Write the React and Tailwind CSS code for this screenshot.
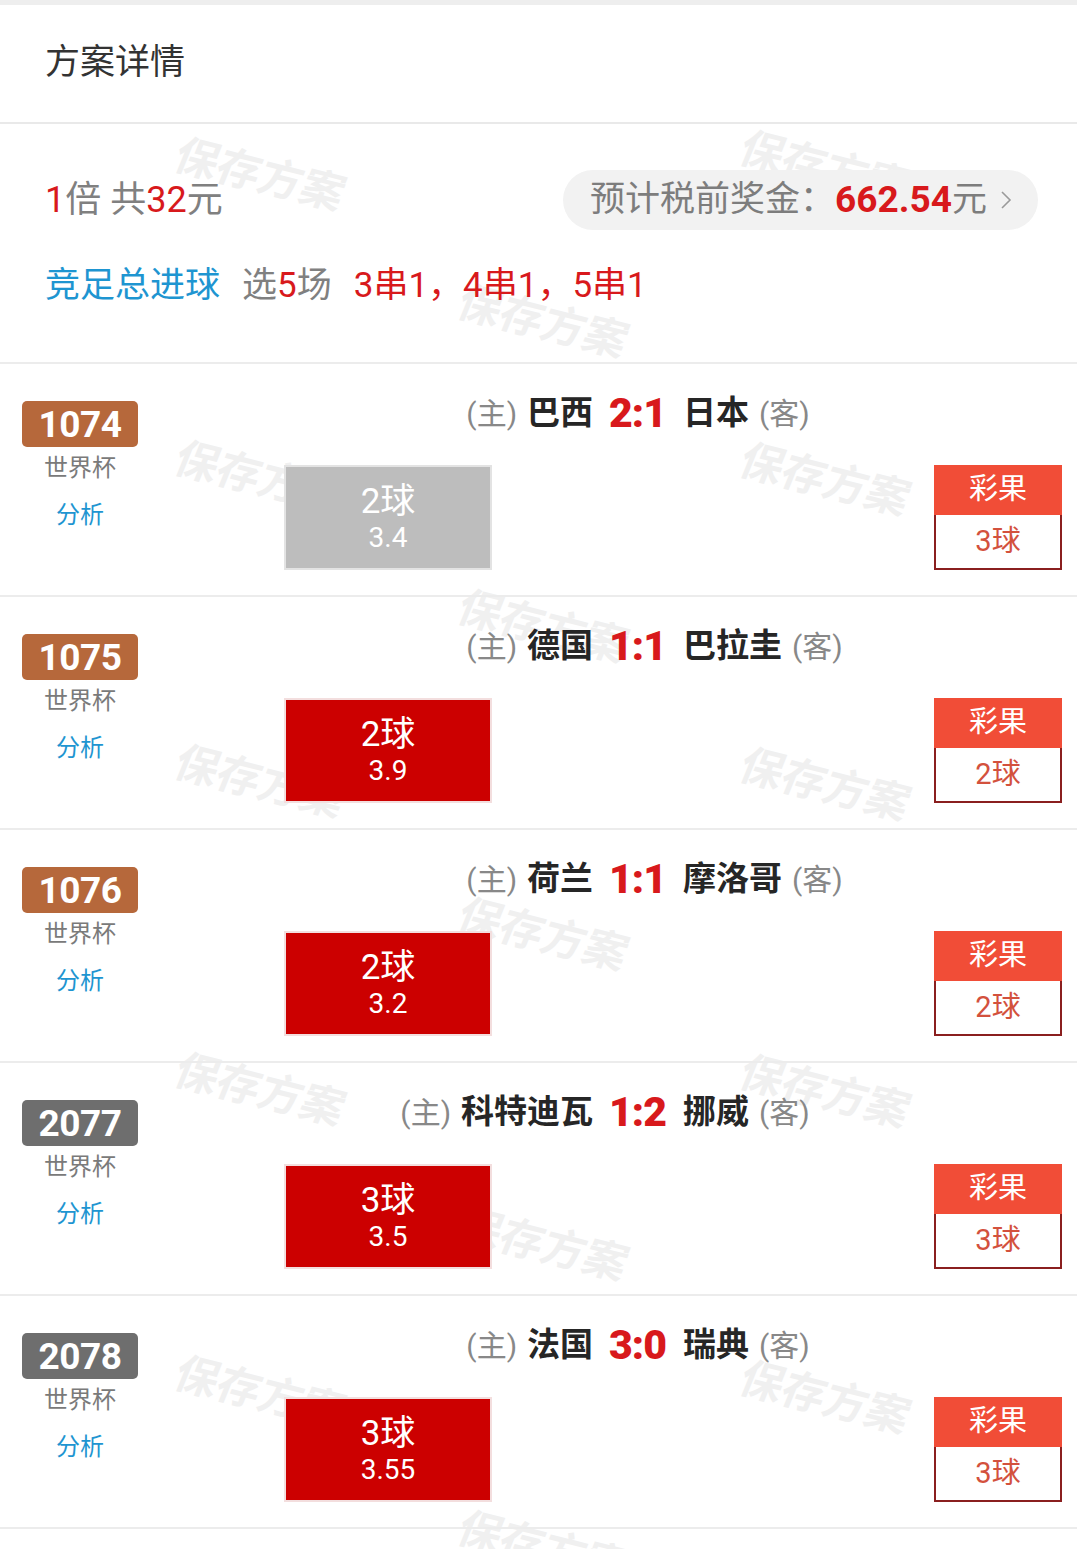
import React from "react";

const matches = [
  { no: "1074", tone: "bg-[#b6683b]", home: "巴西", score: "2:1", away: "日本", pick: "2球", odds: "3.4", hit: false, result: "3球" },
  { no: "1075", tone: "bg-[#b6683b]", home: "德国", score: "1:1", away: "巴拉圭", pick: "2球", odds: "3.9", hit: true, result: "2球" },
  { no: "1076", tone: "bg-[#b6683b]", home: "荷兰", score: "1:1", away: "摩洛哥", pick: "2球", odds: "3.2", hit: true, result: "2球" },
  { no: "2077", tone: "bg-[#6e6e6e]", home: "科特迪瓦", score: "1:2", away: "挪威", pick: "3球", odds: "3.5", hit: true, result: "3球" },
  { no: "2078", tone: "bg-[#6e6e6e]", home: "法国", score: "3:0", away: "瑞典", pick: "3球", odds: "3.55", hit: true, result: "3球" },
];

// light "保存方案" stamps tiled behind the content
const stamps = [
  "left-[260px] top-[175px]",
  "left-[825px] top-[168px]",
  "left-[543px] top-[322px]",
  "left-[260px] top-[478px]",
  "left-[825px] top-[480px]",
  "left-[543px] top-[627px]",
  "left-[260px] top-[782px]",
  "left-[825px] top-[785px]",
  "left-[543px] top-[935px]",
  "left-[260px] top-[1090px]",
  "left-[825px] top-[1092px]",
  "left-[543px] top-[1245px]",
  "left-[260px] top-[1393px]",
  "left-[825px] top-[1398px]",
  "left-[543px] top-[1548px]",
];

const MatchRow = ({ m }) => (
  <div className="grid h-[233px] grid-cols-[198px_1fr] border-b-2 border-[#ececec]">
    {/* number, league, analysis link */}
    <div className="ml-[22px] flex w-[116px] flex-col items-center pt-[37px]">
      <div className={`flex h-[46px] w-[116px] items-center justify-center rounded-[5px] ${m.tone}`}>
        <span className="text-[37px] font-bold leading-none tracking-[-0.5px] text-white">{m.no}</span>
      </div>
      <div className="mt-[6px] h-[30px] text-[24px] leading-[30px] text-[#7a7a7a]">世界杯</div>
      <div className="mt-[17px] h-[30px] text-[24px] leading-[30px] text-[#1e95d1]">分析</div>
    </div>

    <div className="flex flex-col">
      {/* teams and final score */}
      <div className="mt-[24px] grid h-[50px] grid-cols-[1fr_auto_1fr] items-center">
        <div className="flex items-center justify-end gap-[10px] pr-[16px]">
          <span className="text-[30px] text-[#888]">(主)</span>
          <span className="text-[33px] font-bold text-[#262626]">{m.home}</span>
        </div>
        <span className="text-[41px] font-black leading-none tracking-[-1px] text-[#d8191c]">{m.score}</span>
        <div className="flex items-center gap-[10px] pl-[17px]">
          <span className="text-[33px] font-bold text-[#262626]">{m.away}</span>
          <span className="text-[30px] text-[#888]">(客)</span>
        </div>
      </div>

      {/* picked option and actual result */}
      <div className="mt-[27px] flex h-[105px] justify-between pl-[86px] pr-[15px]">
        <div
          className={`flex w-[208px] flex-col items-center justify-center border-2 text-white ${
            m.hit ? "border-[#f3dede] bg-[#cc0000]" : "border-[#e3e3e3] bg-[#bdbdbd]"
          }`}
        >
          <span className="text-[35px] leading-[40px]">{m.pick}</span>
          <span className="text-[28px] leading-[32px]">{m.odds}</span>
        </div>
        <div className="flex w-[128px] flex-col">
          <div className="flex h-[50px] items-center justify-center bg-[#f14d37] text-[29px] text-white">彩果</div>
          <div className="flex flex-1 items-center justify-center border-2 border-t-0 border-[#8a1f1f] bg-white text-[29px] text-[#d3513d]">
            {m.result}
          </div>
        </div>
      </div>
    </div>
  </div>
);

export default function App() {
  return (
    <div className="relative min-h-screen overflow-hidden bg-white font-[family-name:Roboto,'Noto_Sans_CJK_SC',sans-serif]">
      <div className="pointer-events-none absolute inset-0 z-0">
        {stamps.map((pos) => (
          <span
            key={pos}
            className={`absolute ${pos} -translate-x-1/2 -translate-y-1/2 rotate-[14deg] skew-x-[-8deg] whitespace-nowrap text-[43px] font-bold text-[#f0f0f0]`}
          >
            保存方案
          </span>
        ))}
      </div>

      <div className="relative z-10">
        <div className="h-[5px] bg-[#eeeeee]" />
        <div className="flex h-[119px] items-center border-b-2 border-[#e9e9e9] pl-[45px]">
          <h1 className="text-[35px] font-normal text-[#333]">方案详情</h1>
        </div>

        {/* plan summary */}
        <div className="h-[240px] border-b-2 border-[#ececec] pl-[45px] pt-[46px]">
          <div className="flex h-[60px] items-center">
            <div className="text-[36px] text-[#808080]">
              <span className="text-[#d8191c]">1</span>倍 共<span className="text-[#d8191c]">32</span>元
            </div>
            <div className="ml-auto mr-[39px] flex h-[60px] w-[475px] items-center rounded-full bg-[#f2f2f2] pl-[27px] text-[35px] text-[#7d7d7d]">
              <span>预计税前奖金：</span>
              <span className="text-[37px] font-bold text-[#d8191c]">662.54</span>
              <span>元</span>
              <svg className="ml-[12px]" width="14" height="24" viewBox="0 0 14 24" fill="none">
                <path d="M3 4l8 8-8 8" stroke="#9a9a9a" strokeWidth="1.6" />
              </svg>
            </div>
          </div>
          <div className="mt-[36px] flex h-[40px] items-center text-[35px]">
            <span className="text-[#1e95d1]">竞足总进球</span>
            <span className="ml-[22px] text-[#808080]">
              选<span className="text-[#d8191c]">5</span>场
            </span>
            <span className="ml-[22px] text-[#d8191c]">3串1，4串1，5串1</span>
          </div>
        </div>

        {matches.map((m) => (
          <MatchRow key={m.no} m={m} />
        ))}
      </div>
    </div>
  );
}
